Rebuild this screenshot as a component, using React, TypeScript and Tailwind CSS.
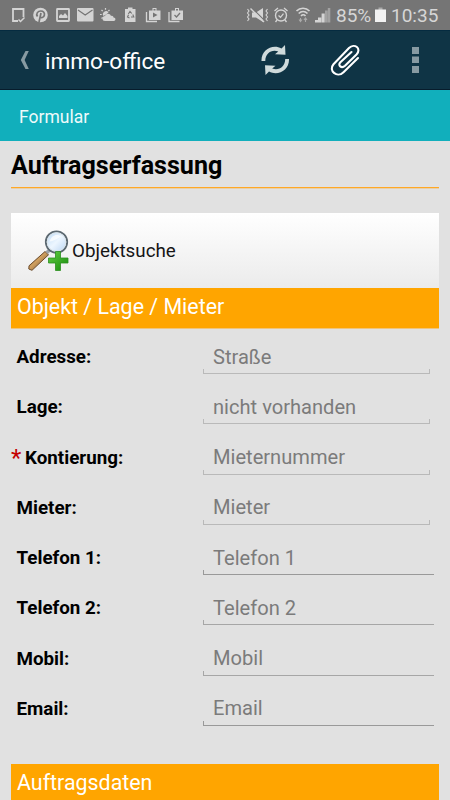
import * as React from 'react';

interface Field {
  label: string;
  placeholder: string;
  required?: boolean;
  open?: boolean;
  line: string;
}

const fields: Field[] = [
  { label: 'Adresse:', placeholder: 'Straße', line: 'border-[#b9b9b9]' },
  { label: 'Lage:', placeholder: 'nicht vorhanden', line: 'border-[#b9b9b9]' },
  { label: 'Kontierung:', placeholder: 'Mieternummer', required: true, line: 'border-[#b9b9b9]' },
  { label: 'Mieter:', placeholder: 'Mieter', line: 'border-[#b9b9b9]' },
  { label: 'Telefon 1:', placeholder: 'Telefon 1', open: true, line: 'border-[#999999]' },
  { label: 'Telefon 2:', placeholder: 'Telefon 2', open: true, line: 'border-[#a6a6a6]' },
  { label: 'Mobil:', placeholder: 'Mobil', open: true, line: 'border-[#a6a6a6]' },
  { label: 'Email:', placeholder: 'Email', open: true, line: 'border-[#999999]' },
];

function NotificationIcons() {
  return (
    <svg className="w-[184px] h-[30px] shrink-0" viewBox="0 0 184 30" fill="#d4d4d4">
      {/* note */}
      <path d="M18 21H13V9h10.500v8" fill="none" stroke="#d4d4d4" strokeWidth="1.800" />
      <path d="m18.500 19.500 2 2 4-4" fill="none" stroke="#d4d4d4" strokeWidth="1.500" />
      {/* pinterest */}
      <circle cx="40.500" cy="15" r="7.300" />
      <path d="M37.500 16.500c-2-3 .5-5.500 3.300-5.500 2.700 0 4 1.800 3.600 4-.5 2.800-3.500 3.300-4.400 1.600M41 13l-2 9" fill="none" stroke="#757575" strokeWidth="1.700" />
      {/* picture */}
      <rect x="57" y="9" width="12" height="12" rx=".5" fill="none" stroke="#d4d4d4" strokeWidth="1.800" />
      <path d="M59 18v-2l2-2 2 1.500 2-2.500 2.500 3v2z" />
      {/* mail */}
      <rect x="77" y="8" width="16.500" height="13.500" rx="1" />
      <path d="m78 10 7.200 5 7.300-5" fill="none" stroke="#757575" strokeWidth="1.200" />
      {/* weather */}
      <path d="M103.500 16a3 3 0 1 1 5-3.500l-2.500 2z" />
      <path d="M105.500 8v1.800M101.500 10l1.200 1.200M100 14.500h1.700M109.500 10l-1.200 1.200M101.500 18.500l1.200-1" stroke="#d4d4d4" strokeWidth="1.200" />
      <path d="M105 21a2.500 2.500 0 0 1 0-5c.5-2.800 5-3.500 6 0 1.500-.6 2.300.3 2.500 1.500 2.500 0 2.500 3.500.3 3.500z" />
      {/* battery saver */}
      <path d="M125 9h3V7.500h4.500V9h3v13H125z" />
      <path d="m128.300 14 1.700-2.500 1.800 2M132.800 14.500l1 2.500h-2.800M129.500 18l-2-1 1-2.300" fill="none" stroke="#757575" strokeWidth="1.100" />
      {/* play store bags */}
      <path d="M149 10.500h3.500V8h4v2.500h4V20H149zm4.500 0h2V9h-2z" />
      <path d="M146.500 12v9.500H157" fill="none" stroke="#d4d4d4" strokeWidth="1.300" />
      <path d="m153 12.500 4.500 2.500-4.500 2.500z" fill="#757575" />
      <path d="M171.500 10.500h3.500V8h4v2.500h4V20h-11.500zm4.500 0h2V9h-2z" />
      <path d="M169 12v9.500h10.500" fill="none" stroke="#d4d4d4" strokeWidth="1.300" />
      <path d="m174.500 15 2 2 3.500-4" fill="none" stroke="#757575" strokeWidth="1.300" />
    </svg>
  );
}

function SystemIcons() {
  return (
    <svg className="w-[85px] h-[30px] shrink-0" viewBox="246 0 85 30" fill="#d4d4d4">
      {/* vibration with muted speaker */}
      <path d="M252 12.500h4l7-4.500v14l-7-4.500h-4z" />
      <path d="m251.500 7.500 12.500 12.500" stroke="#757575" strokeWidth="1.200" />
      <path d="m250.500 8.500 13.500 13.500" stroke="#d4d4d4" strokeWidth="1.400" />
      <path d="M247.500 9l1.500 2-1.500 2 1.500 2-1.500 2 1.500 2-1.500 2M267.500 9l-1.500 2 1.500 2-1.500 2 1.500 2-1.500 2 1.500 2" fill="none" stroke="#d4d4d4" strokeWidth="1.100" />
      {/* alarm */}
      <circle cx="281" cy="15.500" r="5.500" fill="none" stroke="#d4d4d4" strokeWidth="1.400" />
      <path d="m278.500 15.500 2 1.800 3-3.600M274.500 11l3.500-3M287.500 11 284 8M277 20l-1.500 2M285 20l1.500 2" fill="none" stroke="#d4d4d4" strokeWidth="1.300" />
      {/* wifi */}
      <path d="M296.500 11c3.500-3.700 9.500-3.700 13 0M298.700 13.500c2.500-2.700 6.300-2.700 8.800 0M301 16c1.500-1.600 3-1.600 4.500 0" fill="none" stroke="#d4d4d4" strokeWidth="1.600" />
      <path d="M300.500 18v3m-1.500-1.500 1.500 2 1.500-2M305.500 22v-4m-1.500 2 1.500-2 1.500 2" fill="none" stroke="#aaaaaa" strokeWidth="1.100" />
      {/* signal */}
      <path d="M315 20h3v2.500h-3zM318 17.500h3.300v5H318zM321.600 13.500h3.100v9h-3.100z" />
      <path d="M325 10.500h2.600v12H325zM327.800 8h2.500v14.500h-2.500z" fill="#a2a2a2" />
    </svg>
  );
}

function StatusBar() {
  return (
    <div className="flex h-[30px] items-center bg-[#757575] text-[19px] leading-[30px] text-[#d6d6d6]">
      <NotificationIcons />
      <div className="w-[62px] shrink-0" />
      <SystemIcons />
      <span className="ml-[5px] mt-[2px] w-[37px] whitespace-nowrap">85%</span>
      <svg className="ml-[2px] h-[30px] w-[11px] shrink-0" viewBox="0 0 11 30">
        <path d="M3.500 7.500h4V10h-4z" fill="#aaaaaa" />
        <path d="M0 9.500h11V22H0z" fill="#f2f2f2" />
      </svg>
      <span className="ml-[5px] mt-[2px] whitespace-nowrap">10:35</span>
    </div>
  );
}

function AppBar() {
  return (
    <header className="flex h-[60px] items-center border-t border-b border-t-[#052b40] border-b-[#071c2c] bg-[#0f3445] text-white">
      <svg className="ml-[20px] h-[20px] w-[10px]" viewBox="0 0 10 20">
        <path d="M5.500 1h3.300L4.600 10l4.200 9H5.500L.8 10z" fill="#879aa2" />
      </svg>
      <h1 className="ml-[15px] mt-[3px] w-[215px] text-[22.600px] leading-[30px]">immo-office</h1>
      <svg className="h-[32px] w-[30px]" viewBox="0 0 30 32" fill="#cfdadb">
        <path d="M1.500 17C1 6.500 12-.5 21.500 4.500L25 1l.5 9.800-10.500-.6 3.300-2.700C12 5 5.300 9 5.300 17z" />
        <path d="M29 15C29.500 25.500 18.500 32.500 9 27.500L5.500 31 5 21.200l10.500.6-3.300 2.700C18.500 27 25.200 23 25.200 15z" />
      </svg>
      <svg className="ml-[40px] h-[34px] w-[30px]" viewBox="0 0 30 34" fill="none" stroke="#ffffff" strokeWidth="2.100" strokeLinecap="round" strokeLinejoin="round">
        <path d="M28 15 13.500 29.200C7 35.500-2 27.500 3.500 21.200L19 5C24.500-.2 32 5.500 26.500 11.500L15 22.800c-3.500 3.200-7.700-.3-4.600-3.600L21.500 9" />
      </svg>
      <svg className="ml-[51px] h-[28px] w-[9px]" viewBox="0 0 9 28" fill="#879aa2">
        <path d="M1 1h7v7H1zM1 10.500h7v6.500H1zM1 20h7v7H1z" />
      </svg>
    </header>
  );
}

function SearchIcon() {
  return (
    <svg className="h-[42px] w-[42px]" viewBox="0 0 42 42">
      <defs>
        <linearGradient id="glass" x1="0" y1="0" x2="1" y2="1">
          <stop offset="0" stopColor="#b9d8f4" />
          <stop offset=".5" stopColor="#edf6ff" />
          <stop offset="1" stopColor="#b3d1f0" />
        </linearGradient>
        <linearGradient id="handle" x1="0" y1="0" x2="1" y2="1">
          <stop offset="0" stopColor="#75502a" />
          <stop offset=".45" stopColor="#d0a060" />
          <stop offset="1" stopColor="#63401f" />
        </linearGradient>
        <linearGradient id="plus" x1="0" y1="0" x2="1" y2="1">
          <stop offset="0" stopColor="#64cf45" />
          <stop offset="1" stopColor="#168a0b" />
        </linearGradient>
      </defs>
      <path d="m17 21.500 3.500 3.300L4 40.300 .8 39 1 35.800z" fill="url(#handle)" stroke="#6b4b2b" strokeWidth="1" />
      <path d="m17.500 21.500 3-3 2.500 2.500-3 3z" fill="#9da3a8" />
      <circle cx="28.500" cy="12" r="10.700" fill="url(#glass)" stroke="#5c6870" strokeWidth="1.800" />
      <circle cx="28.500" cy="12" r="9.300" fill="none" stroke="#dbe4ea" strokeWidth="1" />
      <path d="M21.500 11.500c2-7 8-8 12-5-3 .5-6 4.500-12 5z" fill="#ffffff" opacity=".7" />
      <path d="M27.500 21.500h5V28H40v5h-7.500v7.500h-5V33H20.500v-5h7z" fill="url(#plus)" stroke="#2c8f20" strokeWidth=".8" />
    </svg>
  );
}

function FieldRow({ label, placeholder, required, open, line }: Field) {
  return (
    <div className="flex h-[50.290px]">
      <label className="flex w-[192px] shrink-0 pt-px text-[18.800px] font-bold leading-[39px] text-black">
        <span className="w-[14px] text-[24px] font-normal text-[#c40000]">{required ? '*' : ''}</span>
        <span className={required ? '' : '-ml-[8.500px]'}>{label}</span>
      </label>
      <div className={open ? 'w-[231px]' : 'w-[227px]'}>
        <input
          className="block h-[32px] w-full bg-transparent px-[10px] pt-[7px] text-[20.100px] outline-none placeholder:text-[#7b7b7b]"
          placeholder={placeholder}
        />
        <div className={`h-[5px] border-b border-l ${open ? '' : 'border-r'} ${line}`} />
      </div>
    </div>
  );
}

export default function App() {
  return (
    <div className="h-[800px] w-[450px] overflow-hidden bg-[#e1e1e1] font-[Roboto,sans-serif]">
      <StatusBar />
      <AppBar />
      <nav className="h-[51px] bg-[#11afbc] pl-[19px] pt-[1px] text-[17.500px] leading-[52px] text-[#eefafa]">Formular</nav>
      <main className="px-[11px]">
        <h2 className="h-[46px] text-[25.100px] font-bold leading-[49px] text-black">Auftragserfassung</h2>
        <div className="h-[2px] border-b border-b-[#e8cfa8] bg-[#ffa826]" />
        <button className="mt-[24px] flex h-[75px] w-full items-center bg-gradient-to-b from-white to-[#ebebeb] pl-[17px] text-[18.800px] text-[#151515]">
          <SearchIcon />
          <span className="ml-[2px] mt-[1px]">Objektsuche</span>
        </button>
        <h3 className="h-[40px] bg-[#ffa500] pl-[6px] text-[21.400px] leading-[37px] text-white">
          Objekt / Lage / Mieter
        </h3>
        <div className="h-px bg-[#f0c47c]" />
        <div className="h-[435px] pt-[8px]">
          {fields.map((field) => (
            <FieldRow key={field.label} {...field} />
          ))}
        </div>
        <h3 className="h-[41px] bg-[#ffa500] pl-[6px] text-[21.400px] leading-[37px] text-white">Auftragsdaten</h3>
      </main>
    </div>
  );
}
